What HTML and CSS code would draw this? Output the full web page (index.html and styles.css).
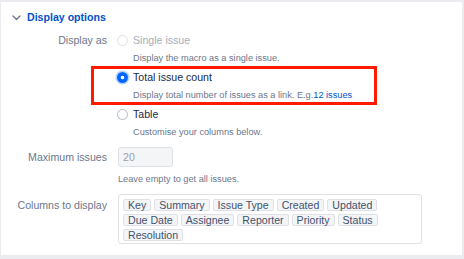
FILE: index.html
```html
<!DOCTYPE html>
<html>
<head>
<meta charset="utf-8">
<link rel="stylesheet" href="styles.css">
</head>
<body>
<div class="panel">
  <div class="heading">
    <svg class="chev" width="9" height="6" viewBox="0 0 9 6"><path d="M1 1 L4.5 4.5 L8 1" fill="none" stroke="#6b778c" stroke-width="1.4" stroke-linecap="round" stroke-linejoin="round"/></svg>
    <span>Display options</span>
  </div>
  <div class="form">
    <div class="label lbl-radio">Display as</div>
    <div class="options">
      <div class="option">
        <div class="title disabled"><span class="radio radio-disabled"></span>Single issue</div>
        <div class="help">Display the macro as a single issue.</div>
      </div>
      <div class="option selected-opt">
        <div class="title"><span class="radio radio-checked"></span>Total issue count</div>
        <div class="help">Display total number of issues as a link. E.g.<span class="link">12 issues</span></div>
        <div class="highlight"></div>
      </div>
      <div class="option">
        <div class="title"><span class="radio"></span>Table</div>
        <div class="help">Customise your columns below.</div>
      </div>
    </div>

    <div class="label lbl-input">Maximum issues</div>
    <div class="control">
      <div class="input">20</div>
      <div class="help">Leave empty to get all issues.</div>
    </div>

    <div class="label lbl-cols">Columns to display</div>
    <div class="tags">
      <span class="tag">Key</span>
      <span class="tag">Summary</span>
      <span class="tag">Issue Type</span>
      <span class="tag">Created</span>
      <span class="tag">Updated</span>
      <span class="tag">Due Date</span>
      <span class="tag">Assignee</span>
      <span class="tag">Reporter</span>
      <span class="tag">Priority</span>
      <span class="tag">Status</span>
      <span class="tag">Resolution</span>
    </div>
  </div>
</div>
</body>
</html>
```
FILE: styles.css
```css
html, body {
  margin: 0;
  padding: 0;
}
body {
  background: #ebecf0;
  width: 464px;
  height: 259px;
  overflow: hidden;
  font-family: "Liberation Sans", Arial, sans-serif;
  font-size: 10.6px;
  color: #172b4d;
}
.panel {
  background: #fff;
  margin: 2px 2px 0 1px;
  height: 253px;
  padding-top: 6px;
  box-sizing: border-box;
}
.heading {
  display: flex;
  align-items: center;
  height: 18px;
  padding-left: 11px;
  color: #0052cc;
  font-weight: bold;
  font-size: 10.6px;
}
.chev {
  margin-right: 6px;
  margin-top: 1px;
}
.form {
  margin-top: 5px;
  display: grid;
  grid-template-columns: 106px 1fr;
  column-gap: 10px;
  row-gap: 6px;
}
.label {
  text-align: right;
  color: #6b778c;
  line-height: 18px;
}
.lbl-input {
  line-height: 20px;
}
.lbl-cols {
  padding-top: 2px;
}
.options {
  display: flex;
  flex-direction: column;
  gap: 1px;
}
.option {
  position: relative;
}
.title {
  display: flex;
  align-items: center;
  line-height: 18px;
  height: 18px;
}
.title.disabled {
  color: #a5adba;
}
.help {
  font-size: 9.2px;
  line-height: 18px;
  color: #6b778c;
  padding-left: 16px;
}
.control .help {
  padding-left: 1px;
  margin-top: 3px;
}
.link {
  color: #0052cc;
}
.radio {
  width: 11px;
  height: 11px;
  box-sizing: border-box;
  border-radius: 50%;
  border: 1.5px solid #b3bac5;
  background: #fff;
  margin-right: 5px;
  flex: none;
}
.radio-disabled {
  border: 1px solid #dfe1e6;
}
.radio-checked {
  border: none;
  background: radial-gradient(circle, #fff 0 1.6px, #0065ff 2.1px);
  box-shadow: 0 0 0 1.5px #b3d4ff;
}
.highlight {
  position: absolute;
  left: -26px;
  top: -2px;
  width: 286px;
  height: 39px;
  box-sizing: border-box;
  border: 3px solid #ff1a00;
  pointer-events: none;
}
.input {
  margin-left: 1px;
  width: 55px;
  height: 20px;
  box-sizing: border-box;
  background: #f4f5f7;
  border: 1px solid #dfe1e6;
  border-radius: 3px;
  color: #97a0af;
  line-height: 18px;
  padding-left: 4px;
}
.tags {
  margin-left: 1px;
  width: 304px;
  height: 50px;
  box-sizing: border-box;
  border: 1px solid #dfe1e6;
  border-radius: 3px;
  padding: 4px 3px 2px 4px;
  display: flex;
  flex-wrap: wrap;
  align-content: flex-start;
  column-gap: 3px;
  row-gap: 3px;
}
.tag {
  height: 12px;
  box-sizing: border-box;
  line-height: 10px;
  padding: 0 4px;
  border: 1px solid #dfe1e6;
  background: #f4f5f7;
  border-radius: 2px;
  color: #42526e;
}
```
